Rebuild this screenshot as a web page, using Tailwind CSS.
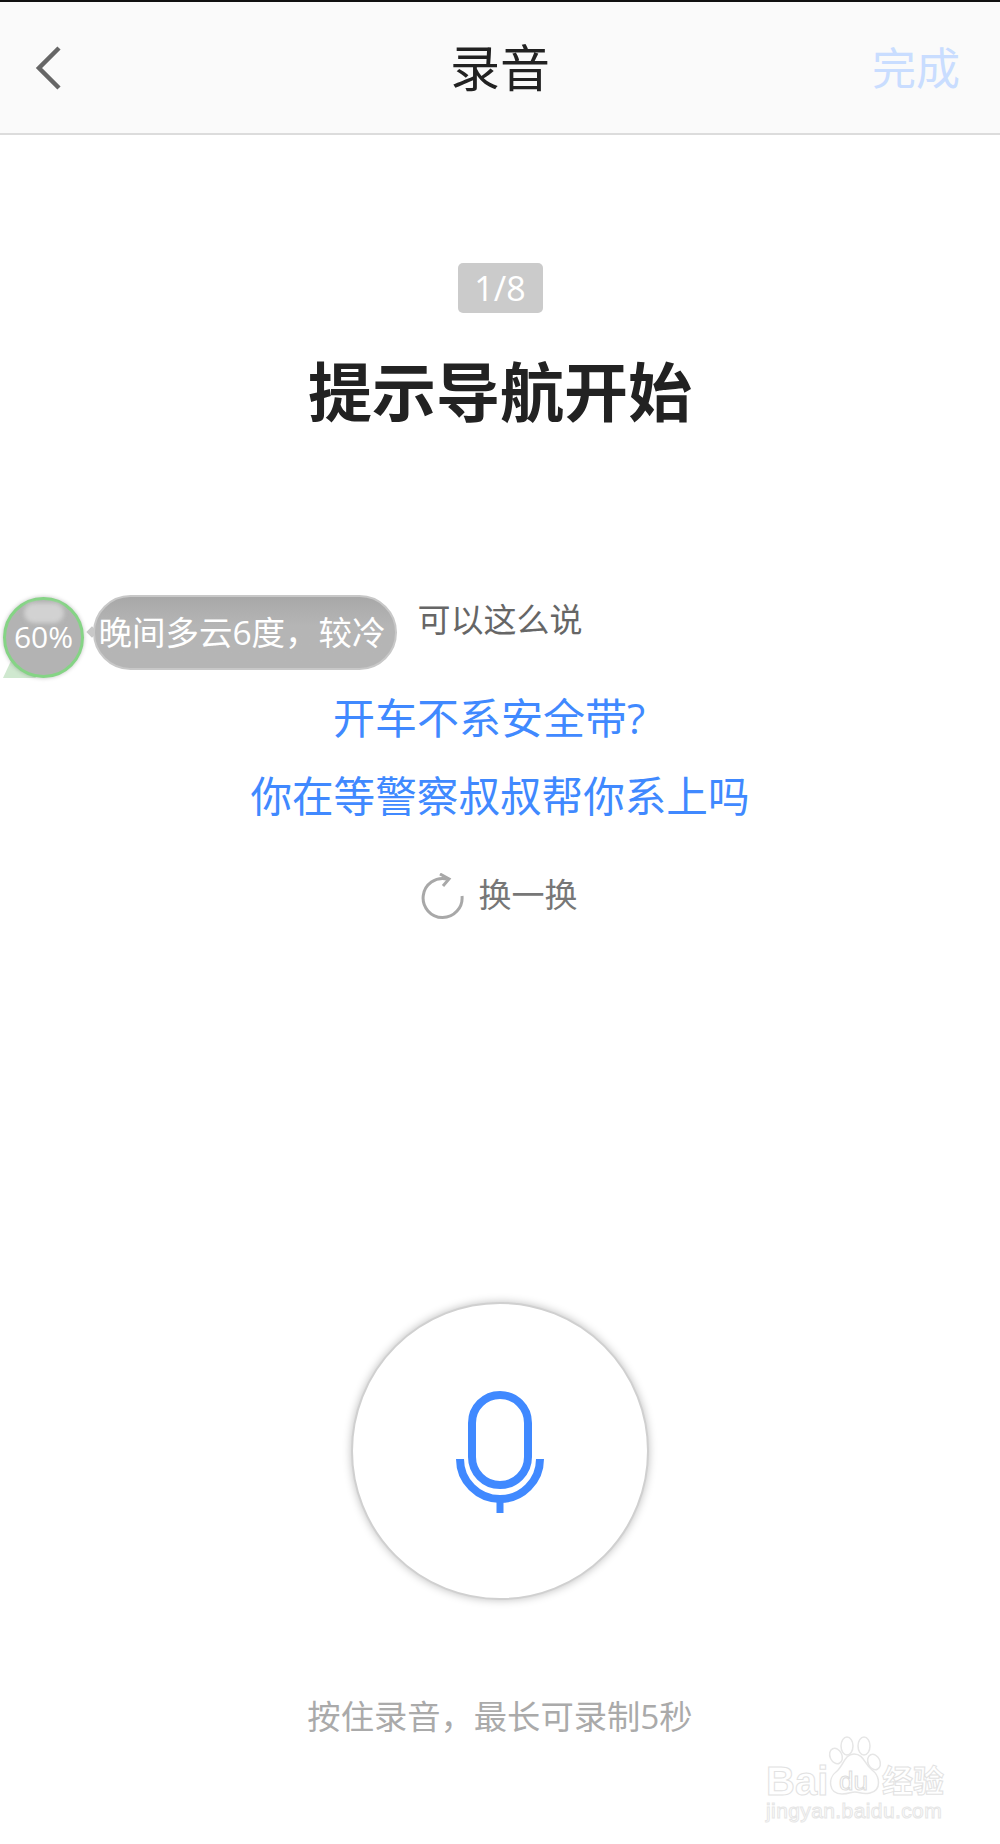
<!DOCTYPE html>
<html lang="zh-CN">
<head>
    <meta charset="UTF-8">
    <meta name="viewport" content="width=device-width, initial-scale=1.0">
    <title>录音</title>
    <script src="https://cdn.jsdelivr.net/npm/@tailwindcss/browser@4"></script>
</head>
<body class="bg-white font-['Open_Sans','Noto_Sans_CJK_SC',sans-serif]">
    <div class="relative w-[1000px] h-[1844px] overflow-hidden bg-white">
        <!-- header -->
        <header class="h-[135px] border-t-2 border-t-[#111] border-b-2 border-b-[#dcdcdc] bg-[#fafafa] relative flex items-center justify-center">
            <svg class="absolute left-[34px] top-[43px]" width="30" height="46" viewBox="0 0 30 46" fill="none">
                <path d="M25 3 L5 23 L25 43" stroke="#666" stroke-width="4.5"/>
            </svg>
            <h1 class="text-[50px] leading-[60px] text-[#222]">录音</h1>
            <span class="absolute right-[40px] top-[36px] text-[44px] leading-[60px] text-[#c9ddff]">完成</span>
        </header>

        <main class="flex flex-col items-center">
            <div class="mt-[128px] w-[85px] h-[50px] rounded-[5px] bg-[#cbcbcb] text-white text-[34px] leading-[50px] text-center">1/8</div>
            <h2 class="mt-[41px] text-[64px] leading-[76px] font-bold text-[#222]">提示导航开始</h2>

            <p class="mt-[168px] text-[33px] leading-[44px] text-[#666]">可以这么说</p>
            <p class="mt-[48px] pr-[22px] text-[42px] leading-[56px] text-[#4089ff]">开车不系安全带?</p>
            <p class="mt-[22px] text-[41.6px] leading-[56px] text-[#4089ff]">你在等警察叔叔帮你系上吗</p>

            <div class="mt-[46px] flex items-center gap-[14px] h-[50px] pr-[2px]">
                <svg width="44" height="48" viewBox="0 0 44 48" fill="none" class="mt-[3px]">
                    <path d="M26 6 A19.5 19.5 0 1 0 41 23" stroke="#a8a8a8" stroke-width="3"/>
                    <path d="M19 1 L28 6 L22 13" stroke="#a8a8a8" stroke-width="3"/>
                </svg>
                <span class="text-[33px] leading-[44px] text-[#777]">换一换</span>
            </div>

            <button class="mt-[382px] w-[298px] h-[298px] rounded-full bg-white border-2 border-[#d0d0d0] shadow-[0_0_8px_rgba(0,0,0,0.25)] flex items-center justify-center">
                <svg width="88" height="122" viewBox="0 0 88 122" fill="none" class="mt-[1px]">
                    <rect x="16" y="4" width="56" height="90" rx="28" stroke="#4089ff" stroke-width="8"/>
                    <path d="M4 68 A40 40 0 0 0 84 68" stroke="#4089ff" stroke-width="8"/>
                    <path d="M44 108 V122" stroke="#4089ff" stroke-width="7"/>
                </svg>
            </button>

            <p class="mt-[94px] text-[33.3px] leading-[44px] text-[#aaaaaa]">按住录音，最长可录制5秒</p>
        </main>

        <!-- floating weather widget -->
        <div class="absolute left-0 top-[590px] w-[400px] h-[92px]">
            <svg class="absolute left-[2px] top-[60px]" width="40" height="30" viewBox="0 0 40 30">
                <path d="M14 0 L1 28 L34 28 Z" fill="#cfe8cf"/>
            </svg>
            <div class="absolute left-[3px] top-[7px] w-[81px] h-[81px] rounded-full bg-[#b3b3b3] border-[3px] border-[#85d485] shadow-[0_0_4px_rgba(0,0,0,0.25)] flex items-center justify-center text-white text-[30px] leading-none">
                <span class="absolute left-[18px] top-[3px] w-[40px] h-[20px] rounded-full bg-[#d2d2d2] blur-[2px]"></span>
                <span class="relative mt-[-2px]">60%</span>
            </div>
            <span class="absolute left-[88px] top-[38px] w-[8px] h-[8px] rotate-45 bg-[#c8c8c8]"></span>
            <div class="absolute left-[93px] top-[5px] w-[304px] h-[75px] rounded-full bg-linear-to-b from-[#a8a8a8] to-[#b5b5b5] to-40% border-2 border-[#c8c8c8] text-white text-[33.5px] leading-[70px] text-center whitespace-nowrap pr-[6px]">晚间多云6度，较冷</div>
        </div>

        <!-- watermark -->
        <div class="absolute left-[760px] top-[1730px] w-[200px] h-[100px] text-white">
            <svg class="absolute left-0 top-0" width="200" height="70" viewBox="0 0 200 70" fill="none" stroke="#e6e6e6" stroke-width="1.5">
                <ellipse cx="76" cy="26" rx="6" ry="8" transform="rotate(-25 76 26)"/>
                <ellipse cx="87" cy="16" rx="6" ry="9"/>
                <ellipse cx="104" cy="16" rx="6" ry="9"/>
                <ellipse cx="114" cy="32" rx="6" ry="8" transform="rotate(-25 114 32)"/>
                <path d="M94 24 C84 24 84 36 76 42 C68 48 68 64 82 64 C90 64 90 62 95 62 C100 62 102 65 110 63 C122 60 120 46 112 40 C104 34 104 24 94 24 Z"/>
            </svg>
            <span class="absolute left-[6px] top-[33px] text-[40px] leading-[36px] font-bold font-['Liberation_Sans',sans-serif] text-white [-webkit-text-stroke:1px_#e2e2e2]">Bai</span>
            <span class="absolute left-[79px] top-[37px] text-[26px] leading-[28px] font-['Liberation_Sans',sans-serif] text-white [-webkit-text-stroke:1px_#dcdcdc]">du</span>
            <span class="absolute left-[122px] top-[32px] text-[31px] leading-[36px] font-bold text-white [-webkit-text-stroke:1px_#e2e2e2]">经验</span>
            <span class="absolute left-[6px] top-[69px] text-[21px] leading-[24px] tracking-[0.4px] font-['Liberation_Sans',sans-serif] text-white [-webkit-text-stroke:1px_#e6e6e6] whitespace-nowrap">jingyan.baidu.com</span>
        </div>
    </div>
</body>
</html>
